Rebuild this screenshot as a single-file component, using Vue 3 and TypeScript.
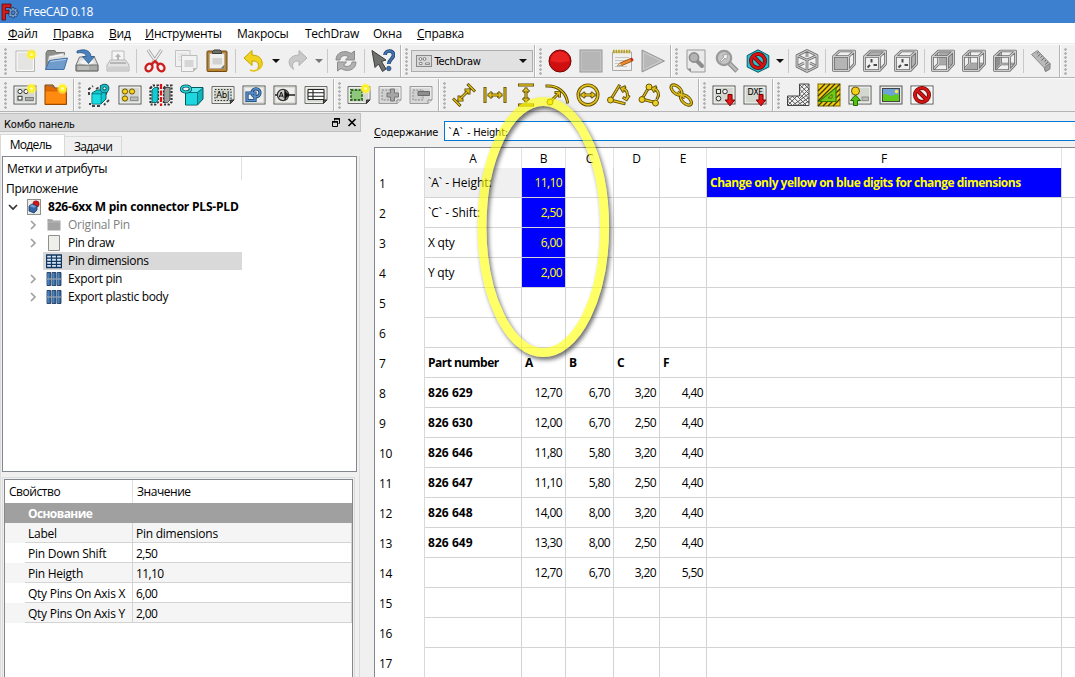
<script setup lang="ts">
interface Tool {
  icon?: string
  kind?: 'sep' | 'drop' | 'dropOff' | 'combo'
}

const t = (...names: string[]): Tool[] =>
  names.map((n) => {
    if (n === '|') return { kind: 'sep' }
    if (n === 'v') return { kind: 'drop' }
    if (n === 'v-') return { kind: 'dropOff' }
    if (n === 'combo') return { kind: 'combo' }
    return { icon: n }
  })

const glow =
  '<circle cx="18.5" cy="5.5" r="5.4" fill="#fcf26a" opacity=".55"/><circle cx="18.5" cy="5.5" r="3.8" fill="#fff01e"/><circle cx="18.5" cy="5.5" r="1.6" fill="#fffcb0"/>'

const plate =
  '<rect x="1" y="3" width="22" height="18" fill="#d3d7cf" stroke="#555753"/><rect x="2.2" y="4.2" width="19.6" height="15.6" fill="none" stroke="#f4f4f2" stroke-width="1"/>'

const plateOff =
  '<path d="M1 3.5H23V17L19 20.500H1z" fill="#d8d8d8" stroke="#9b9b9b"/><path d="M2.200 4.700H21.800V16.500" fill="none" stroke="#f2f2f2"/><path d="M19 20.500V17H23" fill="#eee" stroke="#8a8a8a"/>'

const sheet =
  '<path d="M1 3.500H23V17L19.500 20.500H1z" fill="#d3d7cf" stroke="#6a6c68"/><path d="M2.200 4.700H21.800V16M2.200 4.700V19.300H18" fill="none" stroke="#f6f6f4"/><path d="M19.500 20.500V17H23z" fill="#555753" stroke="#333"/>'

const outline = (d: string): string =>
  `<path d="${d}" fill="none" stroke="#6e6e6e" stroke-width="2.700" stroke-linejoin="round"/><path d="${d}" fill="none" stroke="#cfcfcf" stroke-width="1.100"/>`

const cubeFrame = (face: string, inner: string): string =>
  `${inner ? outline(inner) : ''}${face}${outline('M1.500 7.500L7.500 2H22.500V15L16.500 21.500H1.500zM1.500 7.500H16.500V21.500M16.500 7.500L22.500 2')}`

const innerEdges = 'M7.500 2V15L1.500 21M7.500 15H22'
const axisBars = '<path d="M8.500 10v3.500M4.500 18.500l2.500-2.500M10.500 16h3.500" stroke="#4c4c4c" stroke-width="2"/>'

const cubeTeal =
  '<path d="M5 10L10 7H19V16L14 21H5z" fill="#10c8d0" stroke="#04686e"/><path d="M5 11H14V21M14 11L19 7" fill="none" stroke="#04686e" stroke-width=".9"/><path d="M5.500 11.500H13.500V20.500H5.500z" fill="#18dce2"/>'

const dimYellow = (d: string): string =>
  `<path d="${d}" fill="none" stroke="#5c4a00" stroke-width="3" stroke-linecap="square"/><path d="${d}" fill="none" stroke="#e0c01c" stroke-width="1.300" stroke-linecap="square"/>`

const dot = (x: number, y: number): string =>
  `<circle cx="${x}" cy="${y}" r="3" fill="#ecd024" stroke="#6b5400"/>`

const redArrow =
  '<path d="M16 11.500H20V17H22.800L18 22.800L13.200 17H16z" fill="#e01818" stroke="#7a0000"/>'

const noSign = (cx: number, cy: number, r: number): string =>
  `<circle cx="${cx}" cy="${cy}" r="${r}" fill="none" stroke="#6d0000" stroke-width="4"/><path d="M${cx - r * 0.68} ${cy - r * 0.68}L${cx + r * 0.68} ${cy + r * 0.68}" stroke="#6d0000" stroke-width="4"/><circle cx="${cx}" cy="${cy}" r="${r}" fill="none" stroke="#d41414" stroke-width="2.600"/><path d="M${cx - r * 0.7} ${cy - r * 0.7}L${cx + r * 0.7} ${cy + r * 0.7}" stroke="#d41414" stroke-width="2.600"/>`

const icons: Record<string, string> = {
  new: `<path d="M3 2H21.500V22.500H3z" fill="#ececea" stroke="#b5b5b3"/><path d="M4.200 3.200H20.300V21.300H4.200z" fill="#e4e4e2" stroke="#fafafa"/>${glow}`,
  open: '<path d="M2 21V4L3.500 1.500H11L12 3.500H20.500V12" fill="#8d8f8b" stroke="#747672"/><path d="M5 7L20 4V12H4z" fill="#f6f6f6" stroke="#a5a5a5" stroke-width=".7"/><path d="M5 9L21 6V12H4z" fill="#dcdcdc"/><path d="M5.500 11.500L23.500 9L20 20.500H1.500z" fill="#6f9ccd" stroke="#3e6fa8"/><path d="M6.500 12.500L22 10.300" stroke="#b4cfea"/>',
  save: '<path d="M4.500 8H19.500L23 16V22H1V16z" fill="#dddedc" stroke="#777975"/><path d="M1.200 16H22.800V21.800H1.200z" fill="#a9aba8" stroke="#6f716d"/><path d="M3 18H14M3 20H14" stroke="#d9d9d9" stroke-width=".8"/><ellipse cx="12" cy="13" rx="7" ry="2.500" fill="#f3f3f3"/><path d="M2 2C9 -.500 15.500 1 16 7.500H19.500L13.500 14.500L7.500 7.500H11C11 4.500 7.500 3 2 4z" fill="#4b82bd" stroke="#2a5585" stroke-width=".8"/>',
  print: '<path d="M6 12V2H18V12" fill="#f5f5f5" stroke="#bcbcbc"/><path d="M12 4.500L15 8H13V11.500H11V8H9z" fill="#b4b4b4"/><path d="M4.500 11H19.500L23 16V22H1V16z" fill="#e2e2e2" stroke="#b4b4b4"/><path d="M1.500 17.500H22.500V21.500H1.500z" fill="#cfcfcf"/><path d="M4 14H20" stroke="#a9a9a9" stroke-width="1.500"/>',
  cut: '<path d="M5 1L14.500 15M18.500 1L9 15" stroke="#8e908c" stroke-width="3"/><path d="M5 1L14.500 15M18.500 1L9 15" stroke="#eeeeec" stroke-width="1.600"/><ellipse cx="6" cy="18.500" rx="3.200" ry="4" transform="rotate(35 6 18.500)" fill="none" stroke="#cf1d1d" stroke-width="2.400"/><ellipse cx="18" cy="18.500" rx="3.200" ry="4" transform="rotate(-35 18 18.500)" fill="none" stroke="#cf1d1d" stroke-width="2.400"/><path d="M8.500 15.500L12 12L15.500 15.500" fill="none" stroke="#cf1d1d" stroke-width="2.200"/>',
  copy: '<path d="M1.500 1.500H16V17.500H1.500z" fill="#f1f1f1" stroke="#c3c3c3"/><path d="M4 5H13M4 8H13M4 11H10" stroke="#d6d6d6"/><path d="M7.500 6.500H23V19L19 22.500H7.500z" fill="#f3f3f3" stroke="#bcbcbc"/><path d="M10.500 11H19.500V18H10.500z" fill="#d6d6d6"/><path d="M19 22.500V19H23z" fill="#b8b8b8"/>',
  paste: '<rect x="2" y="2" width="20" height="20.500" rx="1" fill="#b98430" stroke="#6f4b12"/><path d="M4.500 4.500H19.500V19.500H4.500z" fill="#efefed" stroke="#a9a9a7" stroke-width=".7"/><path d="M7.500 9H17V15.500H7.500z" fill="#d2d2d0"/><path d="M19.500 15.500V19.500H15.500z" fill="#777"/><path d="M7.500 4.500V2.500L9 1H15L16.500 2.500V4.500z" fill="#6d6f6b" stroke="#3c3e3a"/>',
  undo: '<path d="M10 1.500L2 9L10 16.500V12C15.500 12 18 14 15.500 20.500C22 16 22 6.500 10 6z" fill="#f0d321" stroke="#c6a300"/><path d="M8 21C13 23.500 20.500 20 20.300 13" stroke="#e4c524" stroke-width="1.800" fill="none"/>',
  redo: '<path d="M14 1.500L22 9L14 16.500V12C8.500 12 6 14 8.500 20.500C2 16 2 6.500 14 6z" fill="#c9c9c9" stroke="#b2b2b2"/>',
  refresh: '<path d="M2 11C2 3 11 .500 17 4.500L20.500 2V11H11.500L14.500 7.700C11 5.500 6.500 6.500 6 11z" fill="#a9a9a9" stroke="#8b8b8b"/><path d="M22 13C22 21 13 23.500 7 19.500L3.500 22V13H12.500L9.500 16.300C13 18.500 17.500 17.500 18 13z" fill="#b3b3b3" stroke="#8b8b8b"/>',
  whats: '<path d="M1 1.500L15 11L10.500 12.500L15 20L11.500 22.500L7.500 15L4 18.500z" fill="#6f716e" stroke="#3c3d3b"/><path d="M14 6C14 1 22.500 .500 22.500 6C22.500 10 17.800 10 17.800 15" fill="none" stroke="#1d3c66" stroke-width="3.600"/><path d="M14 6C14 1 22.500 .500 22.500 6C22.500 10 17.800 10 17.800 15" fill="none" stroke="#3f72ae" stroke-width="2.200"/><circle cx="17.800" cy="19.500" r="2.200" fill="#3f72ae" stroke="#1d3c66" stroke-width=".7"/>',
  record: '<circle cx="12" cy="12" r="11" fill="#cf0f0f" stroke="#6d0404"/><path d="M2.500 12A9.500 9.500 0 0 1 21.500 12Q12 15 2.500 12z" fill="#f02626" opacity=".8"/>',
  stop: '<rect x="1" y="1" width="22" height="22" fill="#b0b0b0" stroke="#969696"/><rect x="2.200" y="2.200" width="19.600" height="19.600" fill="#b6b6b6" stroke="#c6c6c6"/>',
  edit: '<path d="M2.500 3H21.500V21.500H2.500z" fill="#f0f0ee" stroke="#a9aaa7"/><path d="M3 2.500H21" stroke="#b8a01a" stroke-width="3.500" stroke-dasharray="1.600 1"/><path d="M5 8.500H19M5 11.500H17M5 14.500H12M5 17.500H17" stroke="#c5c5c3"/><path d="M8 16.500L10 14L20.500 9.500L22.500 12L12 16.500z" fill="#ef8a2a" stroke="#8a4606" stroke-width=".8"/><path d="M7 17L10 14L12 16.500z" fill="#f0e2c4" stroke="#8a6a36" stroke-width=".4"/><path d="M20 9.700L22 12.300L23.700 11.300L22 8.500z" fill="#c42020"/>',
  play: '<path d="M1 1L23.500 12L1 23z" fill="#b8b8b8" stroke="#989898"/><path d="M2.500 3.400L20.500 12L2.500 20.600z" fill="none" stroke="#cecece"/>',
  fitAll: '<path d="M3 1H21V23H7L3 19.500z" fill="#eaeaea" stroke="#9a9a9a"/><path d="M3 19.500H7V23z" fill="#8f8f8f"/><path d="M13 12L18 17" stroke="#8c8c8c" stroke-width="4" stroke-linecap="round"/><circle cx="10" cy="8.500" r="4.600" fill="#b4b4b4" stroke="#8c8c8c" stroke-width="1.600"/>',
  fitSel: '<path d="M14 14L22 22" stroke="#8c8c8c" stroke-width="4.600"/><path d="M14 14L21.500 21.500" stroke="#b9b9b9" stroke-width="2.500"/><circle cx="9" cy="9" r="7.200" fill="#c4c4c4" stroke="#9a9a9a" stroke-width="2.200"/><path d="M5 12L9 8L7.500 6.500L13 5L11.500 10.500L10 9L6 13z" fill="#f2f2f2" stroke="#777" stroke-width=".5"/>',
  drawStyle: `<path d="M12 .800L22.800 6.500V18L12 23.300L1.200 18V6.500z" fill="#22c5d4" stroke="#0a5a66"/>${noSign(12, 12, 7)}`,
  iso: `${outline('M12 1.500V8M2 17.500L9 14M22 17.500L15 14')}${outline('M12 1.500L22 6.500V17.500L12 22.500L2 17.500V6.500zM2 6.500L12 11L22 6.500M12 11V22.500')}`,
  front: cubeFrame('<path d="M1.500 7.500H16.500V21.500H1.500z" fill="#b5b5b5"/>', ''),
  top: cubeFrame(`<path d="M1.500 7.500L7.500 2H22.500L16.500 7.500z" fill="#b0b0b0"/>${axisBars}`, ''),
  right: cubeFrame(`<path d="M16.500 7.500L22.500 2V15L16.500 21.500z" fill="#b0b0b0"/>${axisBars}`, ''),
  rear: cubeFrame('<path d="M8 3H22V15H8z" fill="#a9a9a9"/>', innerEdges),
  bottom: cubeFrame('<path d="M1.500 21.500L7.500 15H22.500L16.500 21.500z" fill="#a9a9a9"/>', innerEdges),
  left: cubeFrame('<path d="M1.500 7.500L7.500 2V15L1.500 21.500z" fill="#8f8f8f"/>', innerEdges),
  ruler: '<path d="M1.500 5.500L7.500 1.500L20 14.500L19.500 20L15.500 22.500L14 18.500z" fill="#b9b9b9" stroke="#8a8a8a"/><path d="M8.500 3L6.800 4.500M10.400 5L7.600 7.500M12.300 7L10.600 8.500M14.200 9L11.400 11.500M16.100 11L14.400 12.500M18 13L15.200 15.500" stroke="#666"/><path d="M14.500 18.500L20 14.500V20L15.500 22.500z" fill="#a2a2a2" stroke="#7d7d7d" stroke-width=".8"/>',

  pageNew: `${plate}<circle cx="7" cy="8.500" r="2.100" fill="#fff" stroke="#333"/><circle cx="13" cy="8.500" r="2.100" fill="#fff" stroke="#333"/><rect x="5" y="13.300" width="4" height="3.700" fill="#fff" stroke="#333"/><rect x="12.500" y="14.500" width="8" height="3" fill="#aaa" stroke="#666" stroke-width=".7"/>${glow}`,
  pageTpl: `<path d="M1 2H9L11 5H22.500V21.500H1z" fill="#e06a00" stroke="#8d4100"/><path d="M1.500 8H22V21H1.500z" fill="#ff8a10" stroke="#c65d00" stroke-width=".7"/><path d="M2.500 2.800H8.500L10 5" stroke="#777" fill="none"/>${glow}`,
  view: `<path d="M9 6L14 3H22L17 16L13 21" fill="none" stroke="#444" stroke-width="1.800" stroke-dasharray="3 2"/><path d="M2 12V6L6 3M3 22V20M13 23H4M22 17L17 22" fill="none" stroke="#444" stroke-width="2" stroke-dasharray="3 2"/>${cubeTeal}<circle cx="17.500" cy="5.500" r="3" fill="none" stroke="#034e54" stroke-width="3.600"/><circle cx="17.500" cy="5.500" r="3" fill="none" stroke="#14bfc8" stroke-width="2"/>`,
  projGroup: `${plate}<circle cx="7" cy="8.500" r="2.600" fill="#f5d21a" stroke="#6b5400"/><circle cx="14" cy="8.500" r="2.600" fill="#f5d21a" stroke="#6b5400"/><circle cx="7" cy="15.500" r="2.600" fill="#f5d21a" stroke="#6b5400"/><rect x="12.500" y="14" width="7.500" height="3.500" fill="#bbb" stroke="#777" stroke-width=".7"/>`,
  section: '<path d="M1.500 5L4 2.500H9V19L6.500 21.500H1.500zM15 5L17.500 2.500H22.500V19L20 21.500H15z" fill="none" stroke="#333" stroke-width="2.200" stroke-dasharray="2 1.500"/><path d="M3 7L5.500 4.500H9V17L7 19.500H3z" fill="#15c9d1" stroke="#034e54" stroke-width=".8"/><path d="M15 7L17 4.500H21V17L18.500 19.500H15z" fill="#9ba19e" stroke="#333" stroke-width=".8"/><path d="M12 1V23" stroke="#e01010" stroke-width="2.200" stroke-dasharray="5 1.500"/>',
  detail: '<path d="M5.500 9L12 4.500H23V16L17.500 22H5.500z" fill="#0fb4bd" stroke="#04585e"/><path d="M6 9.500H17V21.500H6z" fill="#1cd7df"/><path d="M6 9L12 5H22.500L17 9z" fill="#5be8ed"/><path d="M5.500 9.500H17.500V21.500M17.500 9.500L23 5" fill="none" stroke="#04585e" stroke-width=".7"/><ellipse cx="6" cy="6" rx="4.500" ry="3" fill="none" stroke="#034e54" stroke-width="3.200"/><ellipse cx="6" cy="6" rx="4.500" ry="3" fill="none" stroke="#25d5de" stroke-width="1.700"/>',
  annot: `${sheet}<path d="M4 6.500H20V17.500H4z" fill="none" stroke="#333" stroke-dasharray="1.500 1.500"/><text x="11.800" y="15.300" font-family="DejaVu Sans, sans-serif" font-size="8.500" letter-spacing="-.3" text-anchor="middle" fill="#000">Ab|</text>`,
  draft: '<rect x="1" y="3" width="22" height="18" fill="#eeeeec" stroke="#555753"/><rect x="2.200" y="4.200" width="19.600" height="15.600" fill="none" stroke="#d3d7cf"/><circle cx="14" cy="9.800" r="4" fill="none" stroke="#1d4577" stroke-width="3.200"/><path d="M5 10H13V17.500H5z" fill="none" stroke="#1d4577" stroke-width="3.200"/><path d="M5 10H13V17.500H5z" fill="none" stroke="#5a92d0" stroke-width="1.500"/><circle cx="14" cy="9.800" r="4" fill="none" stroke="#5a92d0" stroke-width="1.500"/>',
  symbol: '<rect x="1" y="3" width="22" height="18" fill="#eeeeec" stroke="#555753"/><rect x="2.200" y="4.200" width="19.600" height="15.600" fill="none" stroke="#d3d7cf"/><circle cx="10" cy="12" r="5.600" fill="#c9cbc8" stroke="#333" stroke-width="1.200"/><path d="M2 12H4.500M15 12H22M12 7V17" stroke="#222" stroke-width="1.500"/><path d="M12 8L16.500 12L12 16z" fill="#111"/><path d="M6 14.500L8.300 9L10.300 14.500M7 13H9.500" stroke="#111" fill="none"/>',
  spread: `${sheet}<path d="M4 6.500H20V16.500H4z" fill="#fff" stroke="#222"/><path d="M4 9.800H20M4 13.200H20M9 6.500V16.500" stroke="#222" stroke-width="1.100"/>`,
  clipNew: `${sheet}<path d="M4 7H15V17H4z" fill="#8ec77c" stroke="#2d6a1d" stroke-width="1.800" stroke-dasharray="2.500 1.300"/>${glow}`,
  clipAdd: `${plateOff}<path d="M4 7H14V17H4z" fill="#cfcfcf" stroke="#888" stroke-dasharray="2 1.300"/><path d="M12.500 6H16.500V10H20.500V14H16.500V18H12.500V14H9V10H12.500z" fill="#a6a6a6" stroke="#777"/>`,
  clipDel: `${plateOff}<path d="M4 7H14V17H4z" fill="#cfcfcf" stroke="#888" stroke-dasharray="2 1.300"/><path d="M9 8.500H20.500V12.500H9z" fill="#8e8e8e" stroke="#6c6c6c"/>`,
  length: dimYellow('M2 16.500L7.500 22M16.500 2L22 7.500M7 17L17 7M7 14V17H10M14 7H17V10'),
  horiz: dimYellow('M2 5.500V18.500M22 5.500V18.500M6 12H18M8 10L6 12L8 14M16 10L18 12L16 14'),
  vert: dimYellow('M5.500 2H18.500M5.500 22H18.500M12 6V18M10 8L12 6L14 8M10 16L12 18L14 16'),
  radius: `${dimYellow('M2 3C13 2.500 21 9.500 22.500 19M6 18L14 10M11 9.500H14.500V13')}${dot(5, 19)}`,
  diameter: `<circle cx="12" cy="12" r="9.800" fill="none" stroke="#5c4a00" stroke-width="3.400"/><circle cx="12" cy="12" r="9.800" fill="none" stroke="#e0c01c" stroke-width="1.700"/>${dimYellow('M6 12H18M8 10.300L6 12L8 13.700M16 10.300L18 12L16 13.700')}`,
  angle: `${dimYellow('M12 3L3.500 17L17 20.500M15.500 5.500C20.500 6.500 21.500 12 19.500 16M17 15L19.500 16.500L21.500 13.500M16 8L14.500 5.500L17.500 4')}${dot(3.5, 17)}`,
  angle3: `${dimYellow('M11 4L4 16L17 19.500M15.500 5.500C20.500 6.500 21.500 12 19.500 15M16 8L14.500 5.500L17.500 4')}${dot(4, 16.5)}${dot(11, 4)}${dot(17.5, 20)}`,
  link: '<g fill="none"><g stroke="#5c4a00" stroke-width="3.200"><ellipse cx="7.500" cy="7" rx="6.500" ry="3.600" transform="rotate(42 7.500 7)"/><ellipse cx="17" cy="17" rx="6.500" ry="3.600" transform="rotate(42 17 17)"/><path d="M8.500 9L16 15"/></g><g stroke="#e0c01c" stroke-width="1.500"><ellipse cx="7.500" cy="7" rx="6.500" ry="3.600" transform="rotate(42 7.500 7)"/><ellipse cx="17" cy="17" rx="6.500" ry="3.600" transform="rotate(42 17 17)"/><path d="M8.500 9L16 15"/></g></g>',
  svgOut: `${plate}<circle cx="13" cy="8.500" r="2.300" fill="#eee" stroke="#333"/><circle cx="6.500" cy="15.500" r="2.300" fill="#eee" stroke="#333"/><rect x="4.500" y="6.500" width="4" height="4" fill="#eee" stroke="#333"/>${redArrow}`,
  dxfOut: `${plate}<text x="12" y="12.200" font-family="DejaVu Sans, sans-serif" font-size="8" letter-spacing="-.4" text-anchor="middle" fill="#000">DXF</text>${redArrow}`,
  hatch: '<path d="M13.500 1H23V22.500H1.500V13H13.500z" fill="#f3f3f3" stroke="#444"/><path d="M13.500 6L18.500 1M13.500 11L23 1.500M13.500 15.500L23 6M6.500 22.500L23 10.500M1.500 18L6.500 13M1.500 22.500L11 13M11 22.500L23 14.500M16 22.500L23 18M18 1L23 6M13.500 1.500L23 11M13.500 6L23 15.500M13.500 11L23 20M1.500 18L6.500 22.500M1.500 13.500L11 22.500M6 13L16 22.500M11 13L20.500 22.500" stroke="#4b4b4b" stroke-width=".9"/>',
  geoHatch: '<rect x="1" y="1" width="22" height="22" fill="#f2cf12" stroke="#7d6800"/><path d="M1 8L8 1M1 13L13 1M1 18L18 1M1 23L23 1M6 23L23 6M11 23L23 11M16 23L23 16" stroke="#3f3500" stroke-width="1.300"/><path d="M2 18.500L19 4.500V18.500z" fill="#74c51c" stroke="#2f7a0a" stroke-width="1.200"/><path d="M11 15L15 11.500V15z" fill="#f2cf12" stroke="#2f7a0a"/>',
  image: `${plate}<circle cx="7.500" cy="8" r="4" fill="#f5d21a" stroke="#6b5400"/><path d="M5.500 22.500V17.500H2.500L7.500 12L12.500 17.500H9.500V22.500z" fill="#53c310" stroke="#1f6a00"/><rect x="14" y="14" width="6.500" height="3.500" fill="#bbb" stroke="#777" stroke-width=".7"/>`,
  picture: '<rect x="1" y="3" width="22" height="18" fill="#e8e8e6" stroke="#555753"/><rect x="3.500" y="5.500" width="17" height="13" fill="#6ea3d8" stroke="#444"/><path d="M4 12C8 8.500 11 15 14 12.500C17 10.500 18 11.500 20 11.500V18H4z" fill="#5fcb1b"/><circle cx="17.500" cy="8.500" r="1.700" fill="#ffe94a"/>',
  toggle: `<rect x="1" y="3" width="22" height="18" fill="#eceeea" stroke="#555753"/><rect x="2.200" y="4.200" width="19.600" height="15.600" fill="none" stroke="#fff"/>${noSign(12, 12, 7)}`,
}

const row1: Tool[][] = [
  t('new', 'open', 'save', 'print', '|', 'cut', 'copy', 'paste', '|', 'undo', 'v', 'redo', 'v-', '|', 'refresh', '|', 'whats'),
  t('combo'),
  t('record', 'stop', 'edit', 'play'),
  t('fitAll', 'fitSel', 'drawStyle', 'v', '|', 'iso', '|', 'front', 'top', 'right', '|', 'rear', 'bottom', 'left', '|', 'ruler'),
  [],
]
const row2: Tool[][] = [
  t('pageNew', 'pageTpl'),
  t('view', 'projGroup', 'section', 'detail', 'annot', 'draft', 'symbol', 'spread'),
  t('clipNew', 'clipAdd', 'clipDel'),
  t('length', 'horiz', 'vert', 'radius', 'diameter', 'angle', 'angle3', 'link'),
  t('svgOut', 'dxfOut'),
  t('hatch', 'geoHatch', 'image', 'picture', 'toggle'),
]

const menus = [
  { key: 'Ф', rest: 'айл', cls: 'm1' },
  { key: 'П', rest: 'равка', cls: 'm2' },
  { key: 'В', rest: 'ид', cls: 'm3' },
  { key: 'И', rest: 'нструменты', cls: 'm4' },
  { key: '', rest: 'Макросы', cls: 'm5' },
  { key: '', rest: 'TechDraw', cls: 'm6' },
  { key: '', rest: 'Окна', cls: 'm7' },
  { key: 'С', rest: 'правка', cls: 'm8' },
]

const tree = [
  { label: 'Original Pin', icon: 'folder', arrow: true, muted: true },
  { label: 'Pin draw', icon: 'page', arrow: true },
  { label: 'Pin dimensions', icon: 'sheet', selected: true },
  { label: 'Export pin', icon: 'array', arrow: true },
  { label: 'Export plastic body', icon: 'array', arrow: true },
]

const treeIcons: Record<string, string> = {
  folder: '<path d="M1.500 2H6L7 3.500H14.500V13.500H1.500z" fill="#a3a3a3"/><path d="M3 2.500H6M2 5H14" stroke="#b9b9b9"/>',
  page: '<path d="M2.500 .500H13.500V15.500H2.500z" fill="#eeefeb" stroke="#8d8f8b"/>',
  sheet: '<path d="M.500 2H15.500V14.500H.500z" fill="#d4e6f8" stroke="#12375f" stroke-width="1.400"/><path d="M0 5.200H16M0 8.300H16M0 11.400H16M5.500 2V14.500M10.500 2V14.500" stroke="#12375f" stroke-width="1.200"/>',
  array: '<path d="M1 1.500H4.800V14.500H1zM6.100 1.500H9.900V14.500H6.100zM11.200 1.500H15V14.500H11.200z" fill="#336aa8" stroke="#142f52" stroke-width=".8"/><path d="M2 2V14M7.100 2V14M12.200 2V14" stroke="#6fa0d4" stroke-width=".8"/><path d="M0 8H16" stroke="#9aa3ad" stroke-width="1.300"/>',
}

const props = [
  ['Label', 'Pin dimensions'],
  ['Pin Down Shift', '2,50'],
  ['Pin Heigth', '11,10'],
  ['Qty Pins On Axis X', '6,00'],
  ['Qty Pins On Axis Y', '2,00'],
]

const columns = ['A', 'B', 'C', 'D', 'E', 'F', '']
const sheetData: Record<number, string[]> = {
  1: ['`A` - Height:', '11,10', '', '', '', 'Change only yellow on blue digits for change dimensions'],
  2: ['`C` - Shift:', '2,50'],
  3: ['X qty', '6,00'],
  4: ['Y qty', '2,00'],
  7: ['Part number', 'A', 'B', 'C', 'F'],
  8: ['826 629', '12,70', '6,70', '3,20', '4,40'],
  9: ['826 630', '12,00', '6,70', '2,50', '4,40'],
  10: ['826 646', '11,80', '5,80', '3,20', '4,40'],
  11: ['826 647', '11,10', '5,80', '2,50', '4,40'],
  12: ['826 648', '14,00', '8,00', '3,20', '4,40'],
  13: ['826 649', '13,30', '8,00', '2,50', '4,40'],
  14: ['', '12,70', '6,70', '3,20', '5,50'],
}

const cellClass = (row: number, col: number) => ({
  num: col > 0 && col < 5 && row !== 7,
  bold: row === 7 || (col === 0 && row > 7) || col === 5,
  part: col === 0 && row > 7,
  caption: col === 0 && row <= 2,
  blue: (col === 1 && row <= 4) || (col === 5 && row === 1),
  current: col === 0 && row === 1,
})
</script>

<template>
  <div class="window">
    <header class="titlebar">
      <svg width="18" height="18" viewBox="0 0 18 18">
        <g fill="#7ba0d0" stroke="#1d3c66" stroke-width=".8">
          <path d="M11 4.500h2l.4 1.700 1.500-.8 1.400 1.400-.8 1.500 1.700.4v2l-1.700.4.8 1.500-1.400 1.400-1.500-.8-.4 1.700h-2l-.4-1.700-1.500.8-1.400-1.400.8-1.500-1.700-.4v-2l1.700-.4-.8-1.500 1.400-1.400 1.500.8z" />
          <circle cx="12" cy="9.700" r="2" fill="#3d80d0" />
        </g>
        <path d="M1 1H10V4.500H4.500V7.500H8V10.500H4.500V17H1z" fill="#d21d1d" stroke="#5d0a0a" stroke-width=".8" />
      </svg>
      <span>FreeCAD 0.18</span>
    </header>

    <nav class="menubar">
      <span v-for="m in menus" :key="m.cls" :class="m.cls"><u>{{ m.key }}</u>{{ m.rest }}</span>
    </nav>

    <div v-for="(row, ri) in [row1, row2]" :key="ri" class="toolrow">
      <div v-for="(bar, bi) in row" :key="bi" class="toolbar">
        <i class="handle"></i>
        <template v-for="(tool, ti) in bar" :key="ti">
          <i v-if="tool.kind === 'sep'" class="sep"></i>
          <i v-else-if="tool.kind === 'drop'" class="drop"></i>
          <i v-else-if="tool.kind === 'dropOff'" class="drop off"></i>
          <div v-else-if="tool.kind === 'combo'" class="combo">
            <svg width="16" height="14" viewBox="0 0 16 14">
              <rect x=".5" y="1.500" width="15" height="11" fill="#d8d8d8" stroke="#8a8a8a" />
              <circle cx="4.500" cy="5" r="1.400" fill="#fff" stroke="#777" />
              <circle cx="8.500" cy="5" r="1.400" fill="#fff" stroke="#777" />
              <path d="M3.500 8.500H6V10.500H3.500zM9.500 9H13.500V10.500H9.500z" fill="#fff" stroke="#777" stroke-width=".8" />
            </svg>
            <span>TechDraw</span>
            <i class="tri"></i>
          </div>
          <svg v-else class="tool" width="24" height="24" viewBox="0 0 24 24" v-html="icons[tool.icon ?? '']"></svg>
        </template>
      </div>
    </div>

    <main class="body">
      <aside class="dock">
        <div class="dock-title">
          <span>Комбо панель</span>
          <svg width="30" height="12" viewBox="0 0 30 12">
            <path d="M4.500 3.500V1.500H9.500V6.500H8.500" fill="none" stroke="#000" />
            <path d="M4 2H10" stroke="#000" stroke-width="1.500" />
            <path d="M2.500 4.500H7.500V9.500H2.500z" fill="#dadada" stroke="#000" />
            <path d="M2 5H8" stroke="#000" stroke-width="1.500" />
            <path d="M18.500 2L25.500 9M25.500 2L18.500 9" stroke="#000" stroke-width="1.700" />
          </svg>
        </div>
        <div class="tabs">
          <div class="tab active">Модель</div>
          <div class="tab">Задачи</div>
        </div>
        <div class="pane">
          <div class="tree">
            <div class="tree-head"><span>Метки и атрибуты</span></div>
            <div class="tree-app">Приложение</div>
            <div class="tree-row root">
              <svg class="arrow" width="12" height="12" viewBox="0 0 12 12"><path d="M2 4L6 8L10 4" fill="none" stroke="#333" stroke-width="1.700" /></svg>
              <svg class="ticon" width="16" height="16" viewBox="0 0 16 16">
                <rect x="1.500" y=".5" width="13" height="15" fill="#ecece8" stroke="#8d8f8b" />
                <circle cx="10" cy="5" r="3.200" fill="#d01818" stroke="#7d0a0a" stroke-width=".5" />
                <path d="M3 7L6 5L11 7V11L8 14L3 12z" fill="#3465a4" stroke="#173a66" stroke-width=".8" />
                <path d="M3.500 7.200L6 5.600L10.500 7.200L8 8.800z" fill="#6f9fd6" />
              </svg>
              <span>826-6xx M pin connector PLS-PLD</span>
            </div>
            <div v-for="node in tree" :key="node.label" class="tree-row child" :class="{ muted: node.muted }">
              <svg class="arrow" width="12" height="12" viewBox="0 0 12 12">
                <path v-if="node.arrow" d="M4 2L8 6L4 10" fill="none" stroke="#a0a0a0" stroke-width="1.700" />
              </svg>
              <div class="node" :class="{ selected: node.selected }">
                <svg class="ticon" width="16" height="16" viewBox="0 0 16 16" v-html="treeIcons[node.icon]"></svg>
                <span>{{ node.label }}</span>
              </div>
            </div>
          </div>
          <div class="prop-pane">
            <div class="props">
              <div class="prop-head"><span>Свойство</span><span>Значение</span></div>
              <div class="prop-group">Основание</div>
              <div v-for="(p, i) in props" :key="p[0]" class="prop-row" :class="{ alt: i % 2 === 0 }">
                <i></i><span>{{ p[0] }}</span><span :class="{ digits: i > 0 }">{{ p[1] }}</span>
              </div>
            </div>
          </div>
        </div>
      </aside>

      <section class="sheet-area">
        <div class="formula">
          <label><u>С</u>одержание</label>
          <div class="input">`A` - Height:</div>
        </div>
        <div class="sheet">
          <div class="srow head">
            <div class="rowno"></div>
            <div v-for="(c, i) in columns" :key="i" class="cell">{{ c }}</div>
          </div>
          <div v-for="r in 17" :key="r" class="srow">
            <div class="rowno">{{ r }}</div>
            <div v-for="(c, i) in columns" :key="i" class="cell" :class="cellClass(r, i)">{{ sheetData[r]?.[i] ?? '' }}</div>
          </div>
        </div>
      </section>
    </main>

    <svg class="marker" width="160" height="290" viewBox="0 0 160 290">
      <defs>
        <mask id="outsideRing">
          <rect width="160" height="290" fill="#fff" />
          <ellipse cx="73.300" cy="147" rx="61.300" ry="125.500" fill="none" stroke="#000" stroke-width="9" />
        </mask>
        <filter id="soft" x="-20%" y="-20%" width="140%" height="140%">
          <feGaussianBlur stdDeviation="2" />
        </filter>
      </defs>
      <g mask="url(#outsideRing)">
        <ellipse cx="75.300" cy="150" rx="61.300" ry="125.500" fill="none" stroke="#000" stroke-opacity=".55" stroke-width="9" filter="url(#soft)" />
      </g>
      <ellipse cx="73.300" cy="147" rx="61.300" ry="125.500" fill="none" stroke="#ff0" stroke-opacity=".6" stroke-width="9" />
    </svg>
  </div>
</template>

<style>
html,
body {
  overflow: hidden;
}
</style>

<style scoped>
* {
  box-sizing: border-box;
}
.window {
  position: relative;
  width: 1075px;
  height: 677px;
  overflow: hidden;
  display: flex;
  flex-direction: column;
  background: #f0f0f0;
  color: #000;
  font: 12px/16px 'Open Sans', 'Noto Sans', sans-serif;
  letter-spacing: -0.25px;
  white-space: pre;
}
.titlebar {
  height: 23px;
  flex: none;
  display: flex;
  align-items: center;
  gap: 4px;
  padding-left: 1px;
  background: #3d80d0;
  color: #fff;
  letter-spacing: -0.45px;
}
.menubar {
  height: 21px;
  flex: none;
  display: flex;
  align-items: center;
  background: #fff;
  border-bottom: 1px solid #ececec;
  padding: 2px 0 0 8px;
}
.m1 { width: 45px; }
.m2 { width: 56px; }
.m3 { width: 36px; }
.m4 { width: 92px; }
.m5 { width: 68px; }
.m6 { width: 68px; }
.m7 { width: 44px; }
.toolrow {
  height: 34px;
  flex: none;
  display: flex;
  border-bottom: 1px solid #b4b4b4;
  border-top: 1px solid #fafafa;
}
.toolbar {
  display: flex;
  align-items: center;
  padding-right: 1px;
  border-right: 1px solid #b4b4b4;
  box-shadow: 1px 0 0 #fff;
}
.toolbar:last-child {
  border-right: 0;
  box-shadow: none;
}
.handle {
  width: 10px;
  height: 27px;
  background: radial-gradient(circle at 1.500px 1.500px, #b4b4b4 1.200px, transparent 1.500px) 4px 0 / 4px 4px no-repeat;
  background-repeat: repeat-y;
}
.toolbar:first-child .handle {
  width: 9.5px;
}
.tool {
  margin: 0 3.5px;
  flex: none;
}
.sep {
  width: 6px;
  height: 24px;
  background: linear-gradient(#c8c8c8, #c8c8c8) 2px 0 / 1px 100% no-repeat;
}
.drop {
  width: 12px;
  display: flex;
  justify-content: center;
}
.drop::before,
.tri {
  content: '';
  border: 4px solid transparent;
  border-top: 4px solid #111;
  border-bottom: 0;
}
.drop.off::before {
  border-top-color: #777;
}
.combo {
  width: 122px;
  height: 22px;
  padding: 0 5px 0 4px;
  display: flex;
  align-items: center;
  gap: 3px;
  background: #e1e1e1;
  border: 1px solid #adadad;
  font: 11px/14px 'DejaVu Sans Condensed', 'Open Sans', sans-serif;
  letter-spacing: -0.2px;
}
.combo span {
  flex: 1;
  padding-top: 1px;
}
.body {
  flex: 1;
  display: flex;
  min-height: 0;
}
.dock {
  width: 361px;
  display: flex;
  flex-direction: column;
  padding-top: 1px;
}
.dock-title {
  height: 19px;
  flex: none;
  display: flex;
  align-items: center;
  justify-content: space-between;
  padding: 1px 0 0 4px;
  border: 1px solid #c0c0c0;
  border-left: 0;
  background: #dadada;
  font: 11px/14px 'DejaVu Sans Condensed', 'Open Sans', sans-serif;
  letter-spacing: -0.2px;
}
.dock-title span {
  padding-top: 3px;
}
.tabs {
  height: 22px;
  flex: none;
  margin-top: 2px;
  display: flex;
  align-items: flex-end;
  letter-spacing: -0.65px;
}
.tab {
  height: 20px;
  width: 57px;
  padding-top: 2px;
  text-align: center;
  border: 1px solid #d9d9d9;
  border-left: 0;
  border-bottom: 0;
}
.tab.active {
  height: 22px;
  width: 65px;
  padding-right: 4px;
  background: #fff;
  border-left: 1px solid #d9d9d9;
}
.pane {
  flex: 1;
  width: 360px;
  min-height: 0;
  display: flex;
  flex-direction: column;
  border: 1px solid #dcdcdc;
  border-top: 0;
  border-bottom: 0;
  padding-right: 2px;
}
.tree {
  height: 316px;
  flex: none;
  margin-left: 1px;
  border: 1px solid #828790;
  background: #fff;
  width: 355px;
}
.tree-head {
  height: 23px;
  width: 239px;
  padding: 4px 0 0 4px;
  border-right: 1px solid #e0e0e0;
  letter-spacing: -0.38px;
}
.tree-app {
  height: 18px;
  padding: 1px 0 0 3px;
  letter-spacing: -0.35px;
}
.tree-row {
  height: 18px;
  display: flex;
  align-items: center;
}
.root {
  font-weight: 700;
  letter-spacing: -0.2px;
  padding-left: 4px;
}
.root .ticon {
  margin: 0 6px 0 7px;
}
.child {
  padding-left: 24px;
  letter-spacing: -0.34px;
}
.node {
  display: flex;
  align-items: center;
  height: 18px;
  width: 199px;
  margin-left: 4px;
  padding-left: 3px;
  gap: 6px;
}
.node.selected {
  background: #d9d9d9;
}
.muted {
  color: #808080;
  letter-spacing: -0.22px;
}
.prop-pane {
  flex: 1;
  margin: 5px 0 0 1px;
  width: 353px;
  border: 1px solid #dcdcdc;
  border-bottom: 0;
  padding: 1px 0 0 1px;
}
.props {
  height: 100%;
  width: 349px;
  border: 1px solid #828790;
  border-bottom: 0;
  background: #fff;
}
.prop-head {
  height: 23px;
  display: grid;
  grid-template-columns: 128px 1fr;
  letter-spacing: -0.45px;
}
.prop-head span {
  padding: 4px 0 0 4px;
}
.prop-head span:first-child {
  border-right: 1px solid #e0e0e0;
}
.prop-group {
  height: 20px;
  padding: 3px 0 0 23px;
  background: #a0a0a0;
  color: #fff;
  font-weight: 700;
  letter-spacing: -0.6px;
}
.prop-row {
  height: 20px;
  display: grid;
  grid-template-columns: 20px 108px 1fr;
}
.prop-row.alt {
  background: #f5f5f5;
}
.prop-row span {
  padding: 3px 0 0 3px;
  border-right: 1px solid #d3d3d3;
  border-bottom: 1px solid #d3d3d3;
}
.prop-row .digits {
  letter-spacing: -0.6px;
}
.sheet-area {
  flex: 1;
  display: flex;
  flex-direction: column;
  padding: 9px 0 0 13px;
  min-width: 0;
}
.formula {
  display: flex;
  height: 20px;
  flex: none;
  font: 11px/14px 'DejaVu Sans Condensed', 'Open Sans', sans-serif;
  letter-spacing: -0.2px;
}
.formula label {
  width: 70px;
  padding-top: 5px;
}
.input {
  flex: 1;
  padding: 4px 0 0 3px;
  border: 1px solid #0078d7;
  border-right: 0;
  background: #fff;
}
.sheet {
  flex: 1;
  margin-top: 6px;
  border: 1px solid #828790;
  border-right: 0;
  border-bottom: 0;
  background: #fff;
  overflow: hidden;
}
.srow {
  height: 30px;
  display: grid;
  grid-template-columns: 50px 97px 44px 48px 46px 47px 355px 1fr;
}
.srow.head {
  height: 20px;
}
.rowno {
  padding: 8px 0 0 4px;
  border-right: 1px solid #d9d9d9;
}
.cell {
  padding: 7px 3px 0;
  border-right: 1px solid #d3d3d3;
  border-bottom: 1px solid #d3d3d3;
}
.head .cell {
  padding: 3px 0 0;
  text-align: center;
  border-bottom: 0;
  border-color: #e2e2e2;
}
.cell:last-child {
  border-right: 0;
}
.num {
  text-align: right;
  letter-spacing: -0.6px;
}
.bold {
  font-weight: 700;
  letter-spacing: -0.5px;
}
.part {
  letter-spacing: 0.05px;
}
.caption {
  letter-spacing: -0.05px;
}
.blue {
  background: #00f;
  color: #ff0;
  background-clip: padding-box;
}
.current {
  background: #f0f0f0;
}
.marker {
  position: absolute;
  left: 470px;
  top: 80px;
}
</style>
